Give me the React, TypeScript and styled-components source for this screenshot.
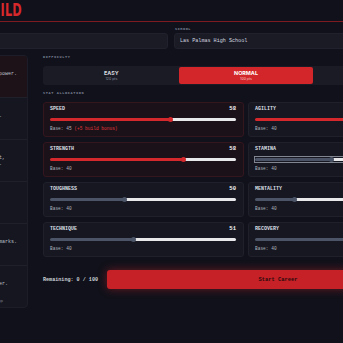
import React from "react";
import styled, { createGlobalStyle } from "styled-components";

const mono = `"Liberation Mono", "DejaVu Sans Mono", monospace`;
const sans = `Inter, "Liberation Sans", sans-serif`;

const GlobalStyle = createGlobalStyle`
  html, body {
    margin: 0;
    background: #10111a;
    overflow: hidden;
  }
  body {
    font-family: ${mono};
    color: #d6d9e0;
  }
`;

const Page = styled.div`
  width: 556px;
  margin-left: -107px;
`;

const Header = styled.header`
  height: 21px;
  display: flex;
  align-items: flex-start;
  border-bottom: 1px solid #7d1b21;
`;

const Title = styled.h1`
  margin: 0;
  width: 129px;
  text-align: right;
  font: 700 18px/19px "Liberation Sans Narrow", "DejaVu Sans Condensed", sans-serif;
  color: #d7282c;
  letter-spacing: 0.3px;
  transform: scaleX(0.7);
  transform-origin: right center;
`;

const Fields = styled.div`
  display: grid;
  grid-template-columns: 1fr 1fr;
  gap: 6px;
  padding-top: 5px;
`;

const Field = styled.label`
  display: flex;
  flex-direction: column;
  gap: 2px;
`;

const SmallLabel = styled.span`
  font: 700 3.6px/4px ${mono};
  letter-spacing: 0.5px;
  color: #7b8295;
  text-transform: uppercase;
  padding-left: 1px;
`;

const TextInput = styled.input`
  height: 16px;
  box-sizing: border-box;
  background: #1a1b25;
  border: 1px solid #20212c;
  border-radius: 3px;
  padding: 0 5px;
  font: 5.1px ${mono};
  color: #d6d9e0;
  outline: none;
`;

const Body = styled.div`
  display: grid;
  grid-template-columns: 135px 1fr;
  gap: 15px;
  margin-top: 6px;
  align-items: start;
`;

const Sidebar = styled.div`
  background: #151620;
  border: 1px solid #1c1d28;
  border-radius: 4px;
  overflow: hidden;
`;

const BuildItem = styled.div<{ $active?: boolean }>`
  height: 31px;
  display: flex;
  flex-direction: column;
  padding: 6px 6px 4px;
  border-bottom: 1px solid #1f2029;
  background: ${({ $active }) => ($active ? "#1e1219" : "transparent")};

  &:last-child {
    border-bottom: none;
  }
`;

const BuildName = styled.div`
  font: 700 5.4px/6px ${mono};
  color: #e4e6eb;
  white-space: nowrap;
`;

const BuildDesc = styled.div`
  margin-top: 4px;
  font: 5px/5.5px ${mono};
  color: #bcc0ca;
  white-space: nowrap;
`;

const BuildMeta = styled.div`
  margin-top: auto;
  font: 4.3px/5px ${mono};
  color: #737989;
  white-space: nowrap;
`;

const Main = styled.div`
  display: flex;
  flex-direction: column;
`;

const SectionLabel = styled(SmallLabel)<{ $gap?: number }>`
  padding-left: 0;
  letter-spacing: 0.6px;
  margin-top: ${({ $gap }) => $gap ?? 0}px;
`;

const Segmented = styled.div`
  margin-top: 7px;
  height: 19px;
  box-sizing: border-box;
  display: grid;
  grid-template-columns: repeat(3, 1fr);
  padding: 1px;
  background: #1a1b25;
  border-radius: 3px;
`;

const Option = styled.button<{ $selected?: boolean }>`
  border: 0;
  border-radius: 2px;
  padding: 0;
  background: ${({ $selected }) => ($selected ? "#d2262a" : "transparent")};
  display: flex;
  flex-direction: column;
  align-items: center;
  justify-content: center;
  gap: 1px;
  font-family: ${sans};
  color: ${({ $selected }) => ($selected ? "#ffffff" : "#d5d8df")};
`;

const OptionName = styled.span`
  font-weight: 700;
  font-size: 5.4px;
  line-height: 6px;
`;

const OptionPts = styled.span<{ $selected?: boolean }>`
  font-size: 3.5px;
  line-height: 4px;
  color: ${({ $selected }) => ($selected ? "#f6caca" : "#8b90a0")};
`;

const StatGrid = styled.div`
  margin-top: 7px;
  display: grid;
  grid-template-columns: 1fr 1fr;
  gap: 5px 4px;
`;

const StatCard = styled.div<{ $boosted?: boolean }>`
  height: 35px;
  box-sizing: border-box;
  padding: 4px 7px 0 6px;
  border-radius: 3px;
  border: 1px solid ${({ $boosted }) => ($boosted ? "#34161e" : "#1f2029")};
  background: ${({ $boosted }) => ($boosted ? "#1b1119" : "#161720")};
  display: flex;
  flex-direction: column;
`;

const StatHead = styled.div`
  display: flex;
  justify-content: space-between;
  align-items: center;
  height: 4px;
`;

const StatName = styled.span`
  font: 700 5px/4px ${mono};
  color: #dcdfe5;
`;

const StatValue = styled.span`
  font: 700 5.6px/4px ${mono};
  color: #f2f2f4;
`;

const Slider = styled.div<{ $focused?: boolean }>`
  margin-top: 5.5px;
  height: 5px;
  display: flex;
  align-items: center;
  outline: ${({ $focused }) => ($focused ? "1px solid #80858f" : "none")};
`;

const Fill = styled.div<{ $color: string }>`
  height: 3px;
  background: ${({ $color }) => $color};
  border-radius: 2px 0 0 2px;
`;

const Thumb = styled.div<{ $color: string }>`
  width: 5px;
  height: 5px;
  flex-shrink: 0;
  margin: 0 -2.5px;
  border-radius: 50%;
  background: ${({ $color }) => $color};
  z-index: 1;
`;

const Rest = styled.div`
  flex: 1;
  height: 3px;
  background: #e8e8eb;
  border-radius: 0 2px 2px 0;
`;

const BaseText = styled.div`
  margin-top: 4.5px;
  font: 4.5px/5px ${mono};
  color: #aeb3be;
  white-space: nowrap;
`;

const Bonus = styled.span`
  color: #e0383a;
`;

const Footer = styled.div`
  margin-top: 13px;
  height: 19px;
  display: flex;
  align-items: center;
  gap: 9px;
`;

const Remaining = styled.span`
  font: 700 5.1px/6px ${mono};
  color: #cfd2d9;
  white-space: nowrap;
`;

const StartButton = styled.button`
  flex: 1;
  height: 19px;
  border: 0;
  border-radius: 3px;
  background: #c62127;
  box-shadow: 0 0 10px rgba(214, 36, 42, 0.45);
  font: 700 5.4px ${mono};
  color: #2a0a0c;
`;

const builds = [
  {
    name: "Speedster",
    desc: ["Lightning-fast winger with great power.", "Favors SPD."],
    meta: "+5 Speed",
  },
  {
    name: "Engine",
    desc: ["Dominates the midfield with grace."],
    meta: "+5 Stamina",
  },
  {
    name: "Tank",
    desc: ["Built like a tank in every contest,", "wins every duel and aerial battle."],
    meta: "+5 Strength",
  },
  { name: "Maestro", desc: ["Reads the game two steps ahead."], meta: "+5 Technique" },
  {
    name: "Playmaker",
    desc: ["Dictates play and hits all their marks."],
    meta: "+5 Mentality",
  },
  {
    name: "Workhorse",
    desc: ["Never stops running, a true grafter."],
    meta: "Bonus: +5 Stamina, +3 Work Rate, +2 Jump",
  },
];

const RED = "#d4282c";
const SLATE = "#4b5567";

const stats = [
  { name: "SPEED", value: 58, pct: 65, color: RED, base: 45, bonus: 5 },
  { name: "AGILITY", value: 62, pct: 100, color: RED, base: 40 },
  { name: "STRENGTH", value: 58, pct: 72, color: RED, base: 40, boosted: true },
  { name: "STAMINA", value: 48, pct: 41, color: SLATE, base: 40, focused: true },
  { name: "TOUGHNESS", value: 50, pct: 40, color: SLATE, base: 40 },
  { name: "MENTALITY", value: 45, pct: 21, color: SLATE, base: 40 },
  { name: "TECHNIQUE", value: 51, pct: 45, color: SLATE, base: 40 },
  { name: "RECOVERY", value: 52, pct: 60, color: SLATE, base: 40 },
];

const difficulties = [
  { name: "EASY", pts: 120 },
  { name: "NORMAL", pts: 100 },
  { name: "HARD", pts: 80 },
];

export default function App() {
  return (
    <>
      <GlobalStyle />
      <Page>
        <Header>
          <Title>BUILD</Title>
        </Header>

        <Fields>
          <Field>
            <SmallLabel>Player Name</SmallLabel>
            <TextInput readOnly defaultValue="" />
          </Field>
          <Field>
            <SmallLabel>School</SmallLabel>
            <TextInput readOnly defaultValue="Las Palmas High School" />
          </Field>
        </Fields>

        <Body>
          <Sidebar>
            {builds.map((b, i) => (
              <BuildItem key={b.name} $active={i === 0}>
                <BuildName>{b.name}</BuildName>
                <BuildDesc>
                  {b.desc.map((line) => (
                    <div key={line}>{line}</div>
                  ))}
                </BuildDesc>
                <BuildMeta>{b.meta}</BuildMeta>
              </BuildItem>
            ))}
          </Sidebar>

          <Main>
            <SectionLabel>Difficulty</SectionLabel>
            <Segmented>
              {difficulties.map((d) => {
                const selected = d.name === "NORMAL";
                return (
                  <Option key={d.name} $selected={selected}>
                    <OptionName>{d.name}</OptionName>
                    <OptionPts $selected={selected}>{d.pts} pts</OptionPts>
                  </Option>
                );
              })}
            </Segmented>

            <SectionLabel $gap={6}>Stat Allocation</SectionLabel>
            <StatGrid>
              {stats.map((s) => (
                <StatCard key={s.name} $boosted={s.bonus !== undefined || s.boosted}>
                  <StatHead>
                    <StatName>{s.name}</StatName>
                    <StatValue>{s.value}</StatValue>
                  </StatHead>
                  <Slider $focused={s.focused}>
                    <Fill $color={s.color} style={{ width: `${s.pct}%` }} />
                    <Thumb $color={s.color} />
                    <Rest />
                  </Slider>
                  <BaseText>
                    Base: {s.base}
                    {s.bonus !== undefined && <Bonus> (+{s.bonus} build bonus)</Bonus>}
                  </BaseText>
                </StatCard>
              ))}
            </StatGrid>

            <Footer>
              <Remaining>Remaining: 0 / 100</Remaining>
              <StartButton>Start Career</StartButton>
            </Footer>
          </Main>
        </Body>
      </Page>
    </>
  );
}
